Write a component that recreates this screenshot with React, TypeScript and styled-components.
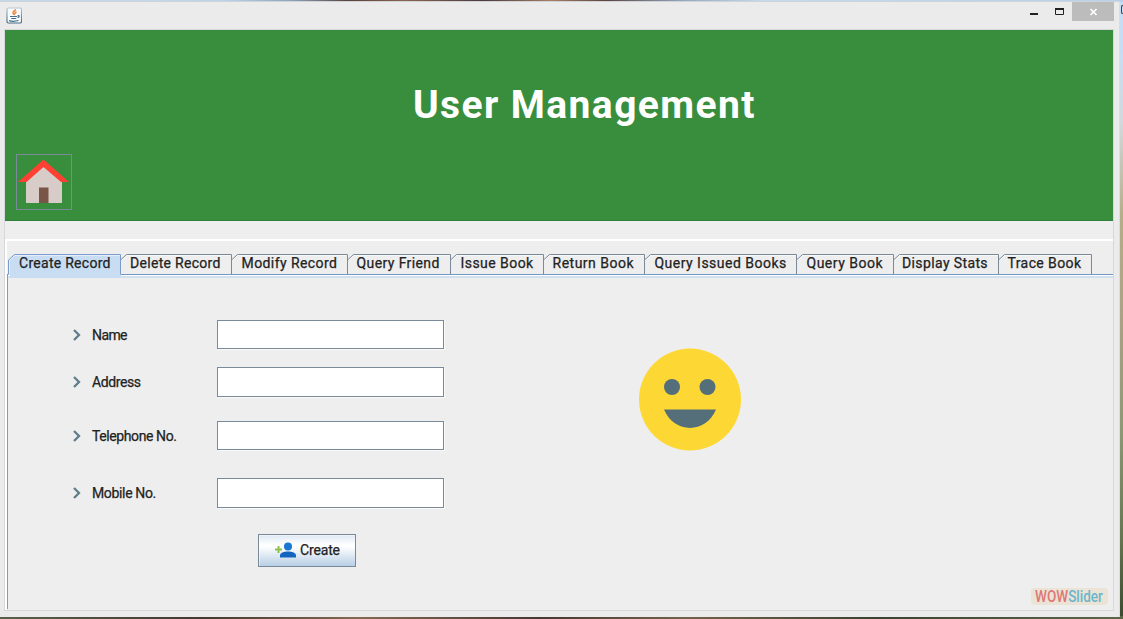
import React from "react";
import styled, { createGlobalStyle } from "styled-components";

const GlobalStyle = createGlobalStyle`
  *, *::before, *::after { box-sizing: border-box; }
  html, body { margin: 0; padding: 0; overflow: hidden; }
  body { font-family: Roboto, "Liberation Sans", sans-serif; color: #222; }
`;

const Desktop = styled.div`
  position: relative;
  width: 1123px;
  height: 619px;
  padding: 1px 3px 2px 0;
  background:
    linear-gradient(90deg, #c3d8ec 0 12%, #b9d4ee 20%, #8ba3bd 26%, #59403b 31%, #8c6450 36%, #4a3a40 43%, #a77f62 49%, #5b4540 54%, #95aac2 61%, #c3daf2 68%, #b7d1ec 100%) top / 100% 2px no-repeat,
    linear-gradient(90deg, #56614a, #43382f 18%, #83694f 32%, #473832 48%, #746248 61%, #394331 78%, #5c6748) bottom / 100% 3px no-repeat,
    linear-gradient(180deg, #c5ddf5 0 8%, #d1d9dc 20%, #b5ad88 35%, #aaa184 52%, #8b9873 70%, #687952 86%, #3b4a30 100%);

  &::after {
    content: "";
    position: absolute;
    top: 5px;
    right: 0;
    width: 2px;
    height: 9px;
    border: solid #3c4248;
    border-width: 1px 0 1px 1px;
    border-radius: 2px 0 0 2px;
  }
`;

const Window = styled.div`
  height: 616px;
  padding: 0 5px 0 4px;
  background: #ebebeb;
  border-top: 1px solid #d0d3d6;
  border-right: 1px solid #dcdcdc;
`;

const TitleBar = styled.header`
  height: 27px;
  display: flex;
  justify-content: space-between;
  align-items: flex-start;
`;

const AppIcon = styled.svg`
  width: 16px;
  height: 17px;
  margin: 5px 0 0 2px;
`;

const WindowControls = styled.div`
  display: flex;
  align-items: flex-start;
`;

const ControlButton = styled.button<{ $close?: boolean }>`
  width: ${(p) => (p.$close ? 42 : 26)}px;
  height: 19px;
  padding: 0;
  border: 0;
  display: block;
  background: ${(p) => (p.$close ? "#bcbcbc" : "transparent")};
  svg { display: block; }
`;

const Content = styled.main`
  width: 1110px;
  height: 582px;
  background: #eee;
  border: 1px solid #d6d9dc;
`;

const Banner = styled.section`
  height: 191px;
  padding: 51px 0 0 11px;
  background: #388e3c;
  border-bottom: 1px solid #2f8135;
  display: flex;
  flex-direction: column;
`;

const Title = styled.h1`
  margin: 1px 0 0 397px;
  height: 46px;
  line-height: 46px;
  color: #fff;
  font-size: 39px;
  font-weight: 700;
  letter-spacing: 1.4px;
  white-space: nowrap;
`;

const HomeButton = styled.button`
  width: 56px;
  height: 56px;
  margin-top: 26px;
  padding: 0;
  border: 1px solid #7a8a99;
  background: transparent;
  svg { display: block; }
`;

const Tabbed = styled.section`
  height: 371px;
  margin-top: 18px;
  border-top: 2px solid #fff;
  border-left: 2px solid #fff;
  padding-top: 13px;
`;

const TabStrip = styled.nav`
  display: flex;
  height: 21px;
  padding-left: 1px;
  border-bottom: 1px solid #7397c3;
`;

const Tab = styled.button<{ $width: number; $active?: boolean }>`
  position: relative;
  flex: none;
  width: ${(p) => p.$width}px;
  height: ${(p) => (p.$active ? 24 : 20)}px;
  padding: 0;
  border: 0;
  background: transparent;
  z-index: ${(p) => (p.$active ? 1 : 0)};
`;

const TabShape = styled.svg`
  position: absolute;
  inset: 0;
  display: block;
`;

const TabText = styled.span<{ $inset: number; $spacing: number }>`
  position: absolute;
  left: ${(p) => p.$inset}px;
  top: -1px;
  color: #222;
  font: 400 14px/20px Roboto, sans-serif;
  -webkit-text-stroke: 0.25px #222;
  letter-spacing: ${(p) => p.$spacing}px;
  white-space: nowrap;
`;

const TabBody = styled.div`
  height: 334px;
  border-left: 1px solid #7a9bcb;
  display: flex;
  align-items: flex-start;
`;

const Form = styled.form`
  width: 631px;
  height: 334px;
  padding-left: 64px;
  border-top: 1px solid #fff;
  box-shadow: inset 0 2px 0 #d0e0ef;
`;

const FormPane = styled.div`
  flex: 1;
  height: 334px;
  border-top: 1px solid #fff;
  box-shadow: inset 0 2px 0 #d0e0ef;
  display: flex;
  flex-direction: column;
  justify-content: space-between;
  padding: 71px 0 4px;
`;

const Row = styled.label<{ $gap: number; $height: number }>`
  display: grid;
  grid-template-columns: 20px 125px 227px;
  align-items: center;
  height: ${(p) => p.$height}px;
  margin-top: ${(p) => p.$gap}px;
`;

const RowText = styled.span<{ $spacing: number }>`
  font: 400 14px/20px Roboto, sans-serif;
  -webkit-text-stroke: 0.25px #222;
  letter-spacing: ${(p) => p.$spacing}px;
`;

const Input = styled.input`
  width: 227px;
  height: 100%;
  margin: 0;
  padding: 2px 4px;
  background: #fff;
  border: 1px solid #7a8a99;
  border-radius: 0;
  box-shadow: 1px 1px 0 #f9f9f9;
  font: 14px Roboto, sans-serif;
`;

const CreateButton = styled.button`
  width: 98px;
  height: 33px;
  margin: 26px 0 0 186px;
  padding: 0 0 1px 15px;
  display: flex;
  align-items: center;
  gap: 3px;
  border: 1px solid #7a8a99;
  box-shadow: inset 1px 1px 0 #ffffff70;
  background: linear-gradient(#dde8f3, #fff 32%, #fff 37%, #b8cfe5);
  color: #222;
  font: 400 14px/20px Roboto, sans-serif;
  -webkit-text-stroke: 0.25px #222;
  letter-spacing: -0.15px;
`;

const Smiley = styled.svg`
  width: 104px;
  height: 104px;
  display: block;
`;

const Watermark = styled.div`
  align-self: flex-end;
  width: 77px;
  height: 17px;
  margin-right: 5px;
  padding-left: 4px;
  border-radius: 4px;
  background: #eae3d6;
  color: #df7775;
  font: 500 16px/18px Roboto, sans-serif;
  white-space: nowrap;
`;

const Narrow = styled.span`
  display: inline-block;
  transform: scaleX(0.845);
  transform-origin: left;
`;

const Blue = styled.span`
  color: #6bb6cb;
`;

const tabs = [
  { text: "Create Record", width: 113, inset: 11, spacing: 0.28 },
  { text: "Delete Record", width: 111, inset: 9, spacing: 0.3 },
  { text: "Modify Record", width: 116, inset: 9.5, spacing: 0.42 },
  { text: "Query Friend", width: 103, inset: 8.5, spacing: 0.4 },
  { text: "Issue Book", width: 93, inset: 9.5, spacing: 0.45 },
  { text: "Return Book", width: 101, inset: 8.5, spacing: 0.5 },
  { text: "Query Issued Books", width: 152, inset: 9.5, spacing: 0.48 },
  { text: "Query Book", width: 97, inset: 9.5, spacing: 0.5 },
  { text: "Display Stats", width: 105, inset: 8, spacing: 0.38 },
  { text: "Trace Book", width: 93, inset: 8.5, spacing: 0.4 },
];

const fields = [
  { text: "Name", gap: 44, height: 29, spacing: -0.6 },
  { text: "Address", gap: 18, height: 30, spacing: -0.4 },
  { text: "Telephone No.", gap: 24, height: 29, spacing: -0.4 },
  { text: "Mobile No.", gap: 28, height: 30, spacing: -0.35 },
];

function JavaIcon() {
  return (
    <AppIcon viewBox="0 0 16 17">
      <defs>
        <linearGradient id="frame" x2="0" y2="1">
          <stop stopColor="#b7c9d2" />
          <stop offset="1" stopColor="#496982" />
        </linearGradient>
      </defs>
      <rect x="1" y="1" width="14.5" height="15" rx="1.5" fill="#f8fafb" stroke="url(#frame)" strokeWidth="1.2" />
      <path d="M10 2.8C7 4.7 6 5.6 8 7.5M10.5 5C8.4 6.1 8.1 7 8.8 8" fill="none" stroke="#ed8d43" strokeWidth="1.6" />
      <path d="M4 9.5h7.2M5.2 11.5h5M3 13.6c2 .7 7 .6 9.5-.1M11.5 8.8c2.2-.9 2.3 1.3.1 1.8" fill="none" stroke="#426f8e" strokeWidth="1.2" />
    </AppIcon>
  );
}

function TabItem({ tab, active }: { tab: (typeof tabs)[number]; active: boolean }) {
  const w = tab.width;
  return (
    <Tab $width={w} $active={active} type="button">
      <TabShape width={w} height={active ? 24 : 20} overflow="visible">
        {active ? (
          <>
            <path d={`M.5 20V6L6.5.5H${w}V24H2V21H.5Z`} fill="#c8ddf2" />
            <path d={`M.5 20V6L6.5.5H${w - 0.5}V20.5`} fill="none" stroke="#7a9bcb" />
            <path d={`M1.5 20V6.5L7 1.5H${w - 1}`} fill="none" stroke="#e4eef8" />
          </>
        ) : (
          <>
            <path d={`M-.5 6L5.5.5H${w - 0.5}V20`} fill="none" stroke="#7a8a99" />
            <path d={`M.5 6.5L6 1.5H${w - 1}`} fill="none" stroke="#f8f8f8" />
          </>
        )}
      </TabShape>
      <TabText $inset={tab.inset} $spacing={tab.spacing}>{tab.text}</TabText>
    </Tab>
  );
}

export default function App() {
  return (
    <Desktop>
      <GlobalStyle />
      <Window>
        <TitleBar>
          <JavaIcon />
          <WindowControls>
            <ControlButton aria-label="Minimize">
              <svg width="26" height="19"><rect x="10" y="11" width="8" height="2" fill="#222" /></svg>
            </ControlButton>
            <ControlButton aria-label="Maximize">
              <svg width="26" height="19"><path d="M9.5 6.5h8v6h-8z" fill="none" stroke="#222" /><path d="M9 7h9" stroke="#222" strokeWidth="2" /></svg>
            </ControlButton>
            <ControlButton aria-label="Close" $close>
              <svg width="42" height="19"><path d="M18.5 7l6 6m0-6l-6 6" stroke="#fff" strokeWidth="1.7" /></svg>
            </ControlButton>
          </WindowControls>
        </TitleBar>
        <Content>
          <Banner>
            <Title>User Management</Title>
            <HomeButton aria-label="Home">
              <svg width="54" height="54" viewBox="0 0 54 54">
                <path d="M9 25L27 9l18 16v23H9Z" fill="#d7ccc8" />
                <path d="M22 32.5h9.5V48H22z" fill="#795548" />
                <path d="M26.5 4.5L52 27h-8L26.5 12 9.5 27H1Z" fill="#ff4033" />
              </svg>
            </HomeButton>
          </Banner>
          <Tabbed>
            <TabStrip>
              {tabs.map((tab, i) => <TabItem key={tab.text} tab={tab} active={i === 0} />)}
            </TabStrip>
            <TabBody>
              <Form>
                {fields.map((field) => (
                  <Row key={field.text} $gap={field.gap} $height={field.height}>
                    <svg width="12" height="16"><path d="M2 3l5 5-5 5" fill="none" stroke="#607d8b" strokeWidth="2.3" /></svg>
                    <RowText $spacing={field.spacing}>{field.text}</RowText>
                    <Input aria-label={field.text} />
                  </Row>
                ))}
                <CreateButton type="button">
                  <svg width="23" height="18" viewBox="0 0 23 18">
                    <path d="M1 8.5h7M4.5 5v7" stroke="#8bc34a" strokeWidth="2" />
                    <circle cx="14" cy="5.5" r="4" fill="#1976d2" />
                    <path d="M6 16.5v-2c0-5.2 16-5.2 16 0v2Z" fill="#1565c0" />
                  </svg>
                  Create
                </CreateButton>
              </Form>
              <FormPane>
                <Smiley viewBox="0 0 104 104">
                  <circle cx="51" cy="52.5" r="51" fill="#fdd835" />
                  <circle cx="33" cy="40" r="8" fill="#546e7a" />
                  <circle cx="68.5" cy="40" r="8" fill="#546e7a" />
                  <path d="M25 62.5h52C67 87 35 87 25 62.5Z" fill="#546e7a" />
                </Smiley>
                <Watermark><Narrow>WOW<Blue>Slider</Blue></Narrow></Watermark>
              </FormPane>
            </TabBody>
          </Tabbed>
        </Content>
      </Window>
    </Desktop>
  );
}
